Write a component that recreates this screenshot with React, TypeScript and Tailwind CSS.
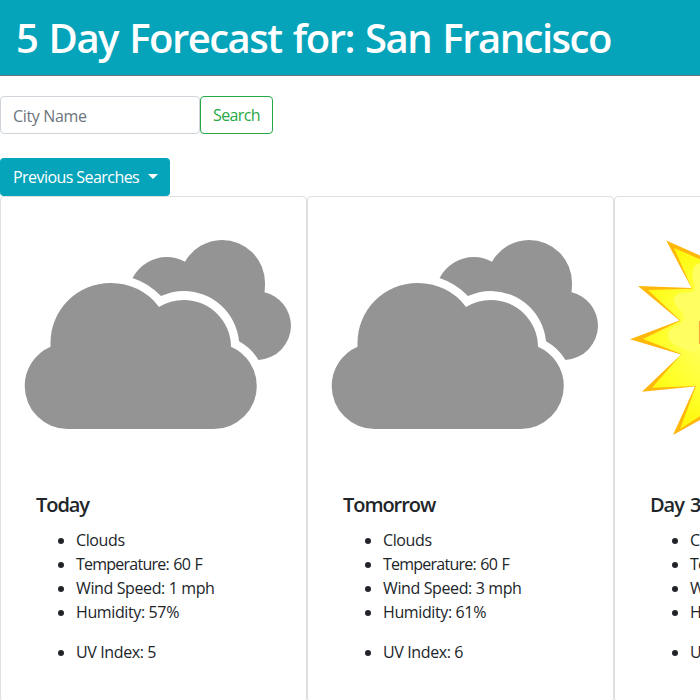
const days = [
  { title: "Today", sky: "Clouds", temp: 60, wind: 1, humidity: 57, uv: 5, icon: "clouds" },
  { title: "Tomorrow", sky: "Clouds", temp: 60, wind: 3, humidity: 61, uv: 6, icon: "clouds" },
  { title: "Day 3", sky: "Clear", temp: 64, wind: 4, humidity: 48, uv: 6, icon: "sun" },
];

function Clouds() {
  return (
    <svg viewBox="1 197 305 276" className="block h-[276px] w-[305px]" fill="#949494">
      <path d="M67.5 429A43 43 0 0 1 24.7 386A43 43 0 0 1 50.5 346.7V343A60 60 0 0 1 110.5 282.9A60 60 0 0 1 159 306.9A47.5 47.5 0 0 1 184 299.9A47.3 47.3 0 0 1 231 346.7A43 43 0 0 1 256.8 386A43 43 0 0 1 214 429Z" />
      <path d="M132.5 278A39 39 0 0 1 167 257A38 38 0 0 1 185 261.7A43 43 0 0 1 222 239.9A43 43 0 0 1 265 283Q265 288 264.5 292.3A34.5 34.5 0 0 1 291 326A34.5 34.5 0 0 1 258.5 360A52 52 0 0 0 239 341.3A55.5 55.5 0 0 0 184 291A55.5 55.5 0 0 0 161 296.1A68.5 68.5 0 0 0 132.5 278Z" />
    </svg>
  );
}

function Sun() {
  return (
    <svg viewBox="615 197 305 276" className="block h-[276px] w-[305px]">
      <defs>
        <radialGradient id="sun" gradientUnits="userSpaceOnUse" cx="730" cy="335" r="110">
          <stop offset="0.3" stopColor="#ffff55" />
          <stop offset="0.65" stopColor="#ffff28" />
          <stop offset="1" stopColor="#fff500" />
        </radialGradient>
      </defs>
      <path fill="#ffb70b" d="M666.3 240.5L702 256.5V419L673 435L695 386.5L642 391.7L681 354.5L630 339.3L679.5 320.5L638 286L691.5 288Z" />
      <path fill="url(#sun)" d="M674 248L702 260V415L680 429L696 386L652 387.8L681.5 354L643 339L680.5 320.8L648 290L692 288.8Z" />
      <path fill="#ffff62" d="M702 263C694 263 690 271 694 283C697 293 692 293 683 293C672 294 671 303 680 310C687 317 684 324 676 326C665 330 666 341 677 346C688 352 698 354 702 347Z" />
      <path d="M699.5 321V344" stroke="#ffa33a" strokeWidth="1.2" />
    </svg>
  );
}

export default function App() {
  return (
    <div className="h-[700px] w-[700px] overflow-hidden bg-white font-['Open_Sans','Noto_Sans',sans-serif] text-base leading-6 text-[#212529]">
      <header className="h-[76px] border-b border-[#6c757d] bg-[#06a4bb] px-4 pt-2">
        <h1 className="text-[40px] font-semibold leading-[60px] tracking-[-1.5px] [word-spacing:2.3px] whitespace-nowrap text-white">5 Day Forecast for: San Francisco</h1>
      </header>
      <form className="mt-5 flex">
        <input placeholder="City Name" className="h-[38px] w-[200px] rounded border border-[#ced4da] px-3 pt-0.5 tracking-[-0.33px] placeholder:text-[#6c757d] placeholder:opacity-100" />
        <button type="button" className="h-[38px] w-[73px] rounded border border-[#28a745] tracking-[-0.6px] text-[#28a745]">Search</button>
      </form>
      <button className="mt-6 flex h-[38px] w-[170px] items-center rounded bg-[#06a4bb] pl-[13px] text-white">
        <span className="w-[135px] text-left tracking-[-0.56px] whitespace-nowrap">Previous Searches</span>
        <span className="-mt-0.5 border-x-[5px] border-t-[5px] border-x-transparent border-t-white" />
      </button>
      <main className="flex">
        {days.map((d) => (
          <section key={d.title} className="h-[506px] w-[307px] shrink-0 rounded border border-[#dfdfdf]">
            {d.icon === "sun" ? <Sun /> : <Clouds />}
            <div className="px-[35px] pt-5">
              <h5 className="mb-[11px] text-xl font-semibold leading-6 tracking-[-1.05px] [word-spacing:2px] text-[#212529]">{d.title}</h5>
              <ul className="list-disc pl-10 tracking-[-0.38px] whitespace-nowrap">
                <li>{d.sky}</li>
                <li><span className="tracking-[-0.76px] [word-spacing:1px]">Temperature: {d.temp} F</span></li>
                <li>Wind Speed: {d.wind} mph</li>
                <li className="mb-4">Humidity: {d.humidity}%</li>
                <li>UV Index: {d.uv}</li>
              </ul>
            </div>
          </section>
        ))}
      </main>
    </div>
  );
}
